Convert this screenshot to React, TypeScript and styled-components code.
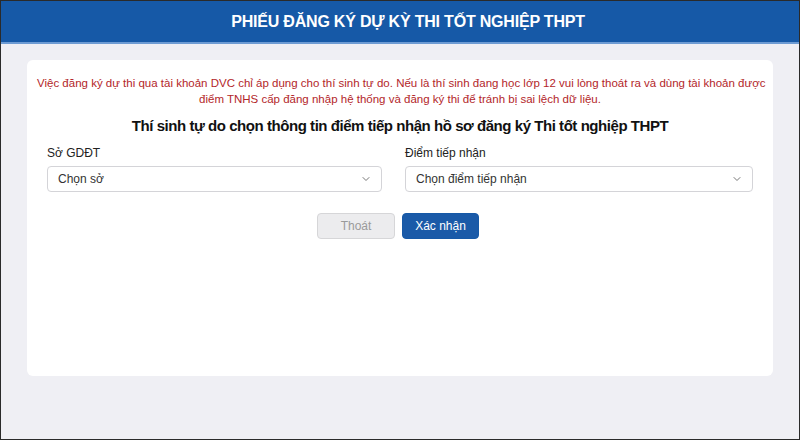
import styled, { createGlobalStyle } from "styled-components";

const GlobalStyle = createGlobalStyle`
  html, body {
    margin: 0;
    padding: 0;
    background: #efeff4;
  }
  body {
    font-family: "Liberation Sans", Arial, sans-serif;
  }
`;

const Page = styled.div`
  box-sizing: border-box;
  width: 800px;
  height: 440px;
  border: 1px solid #2a2a2a;
  background: #efeff4;
  overflow: hidden;
`;

const Header = styled.header`
  height: 41px;
  display: flex;
  align-items: center;
  justify-content: center;
  padding-left: 16px;
  background: #1659a7;
  border-bottom: 2px solid #6d9bd3;
  color: #fff;
  font-size: 16px;
  font-weight: 700;
  letter-spacing: -0.2px;
`;

const Card = styled.main`
  margin: 16px 26px 0;
  height: 316px;
  box-sizing: border-box;
  padding: 15px 20px;
  background: #fff;
  border-radius: 6px;
`;

const Notice = styled.p`
  margin: 0 -10px;
  color: #b3262a;
  font-size: 11.5px;
  line-height: 16px;
  text-align: center;
  white-space: nowrap;
`;

const Title = styled.h1`
  margin: 9px 0 0;
  color: #111;
  font-size: 15px;
  font-weight: 700;
  letter-spacing: -0.45px;
  line-height: 20px;
  text-align: center;
`;

const Fields = styled.div`
  display: grid;
  grid-template-columns: 335px 1fr;
  column-gap: 23px;
  margin-top: 9px;
`;

const Field = styled.label`
  display: flex;
  flex-direction: column;
  gap: 5px;
`;

const Label = styled.span`
  font-size: 12px;
  color: #222;
  line-height: 16px;
`;

const SelectBox = styled.div`
  height: 26px;
  box-sizing: border-box;
  display: flex;
  align-items: center;
  justify-content: space-between;
  padding: 0 10px 0 10px;
  border: 1px solid #d4d4d8;
  border-radius: 4px;
  background: #fff;
  font-size: 12px;
  color: #333;
`;

const Actions = styled.div`
  display: flex;
  justify-content: center;
  gap: 7px;
  margin-top: 21px;
  padding-right: 4px;
`;

const Button = styled.button<{ $primary?: boolean }>`
  height: 26px;
  width: ${({ $primary }) => ($primary ? "77px" : "78px")};
  border-radius: 4px;
  font-family: inherit;
  font-size: 12px;
  cursor: pointer;
  border: 1px solid ${({ $primary }) => ($primary ? "#1659a7" : "#d6d6d8")};
  background: ${({ $primary }) => ($primary ? "#1a5aa8" : "#ececee")};
  color: ${({ $primary }) => ($primary ? "#fff" : "#9a9a9a")};
`;

function Chevron() {
  return (
    <svg width="10" height="10" viewBox="0 0 10 10" fill="none">
      <path d="M2 3.5 L5 6.5 L8 3.5" stroke="#777" strokeWidth="1" strokeLinecap="round" strokeLinejoin="round" />
    </svg>
  );
}

function App() {
  return (
    <>
      <GlobalStyle />
      <Page>
        <Header>PHIẾU ĐĂNG KÝ DỰ KỲ THI TỐT NGHIỆP THPT</Header>
        <Card>
          <Notice>
            Việc đăng ký dự thi qua tài khoản DVC chỉ áp dụng cho thí sinh tự do. Nếu là thí sinh đang học lớp 12 vui lòng thoát ra và dùng tài khoản được
            <br />
            điểm TNHS cấp đăng nhập hệ thống và đăng ký thi để tránh bị sai lệch dữ liệu.
          </Notice>
          <Title>Thí sinh tự do chọn thông tin điểm tiếp nhận hồ sơ đăng ký Thi tốt nghiệp THPT</Title>
          <Fields>
            <Field>
              <Label>Sở GDĐT</Label>
              <SelectBox>
                Chọn sở
                <Chevron />
              </SelectBox>
            </Field>
            <Field>
              <Label>Điểm tiếp nhận</Label>
              <SelectBox>
                Chọn điểm tiếp nhận
                <Chevron />
              </SelectBox>
            </Field>
          </Fields>
          <Actions>
            <Button>Thoát</Button>
            <Button $primary>Xác nhận</Button>
          </Actions>
        </Card>
      </Page>
    </>
  );
}

export default App;
